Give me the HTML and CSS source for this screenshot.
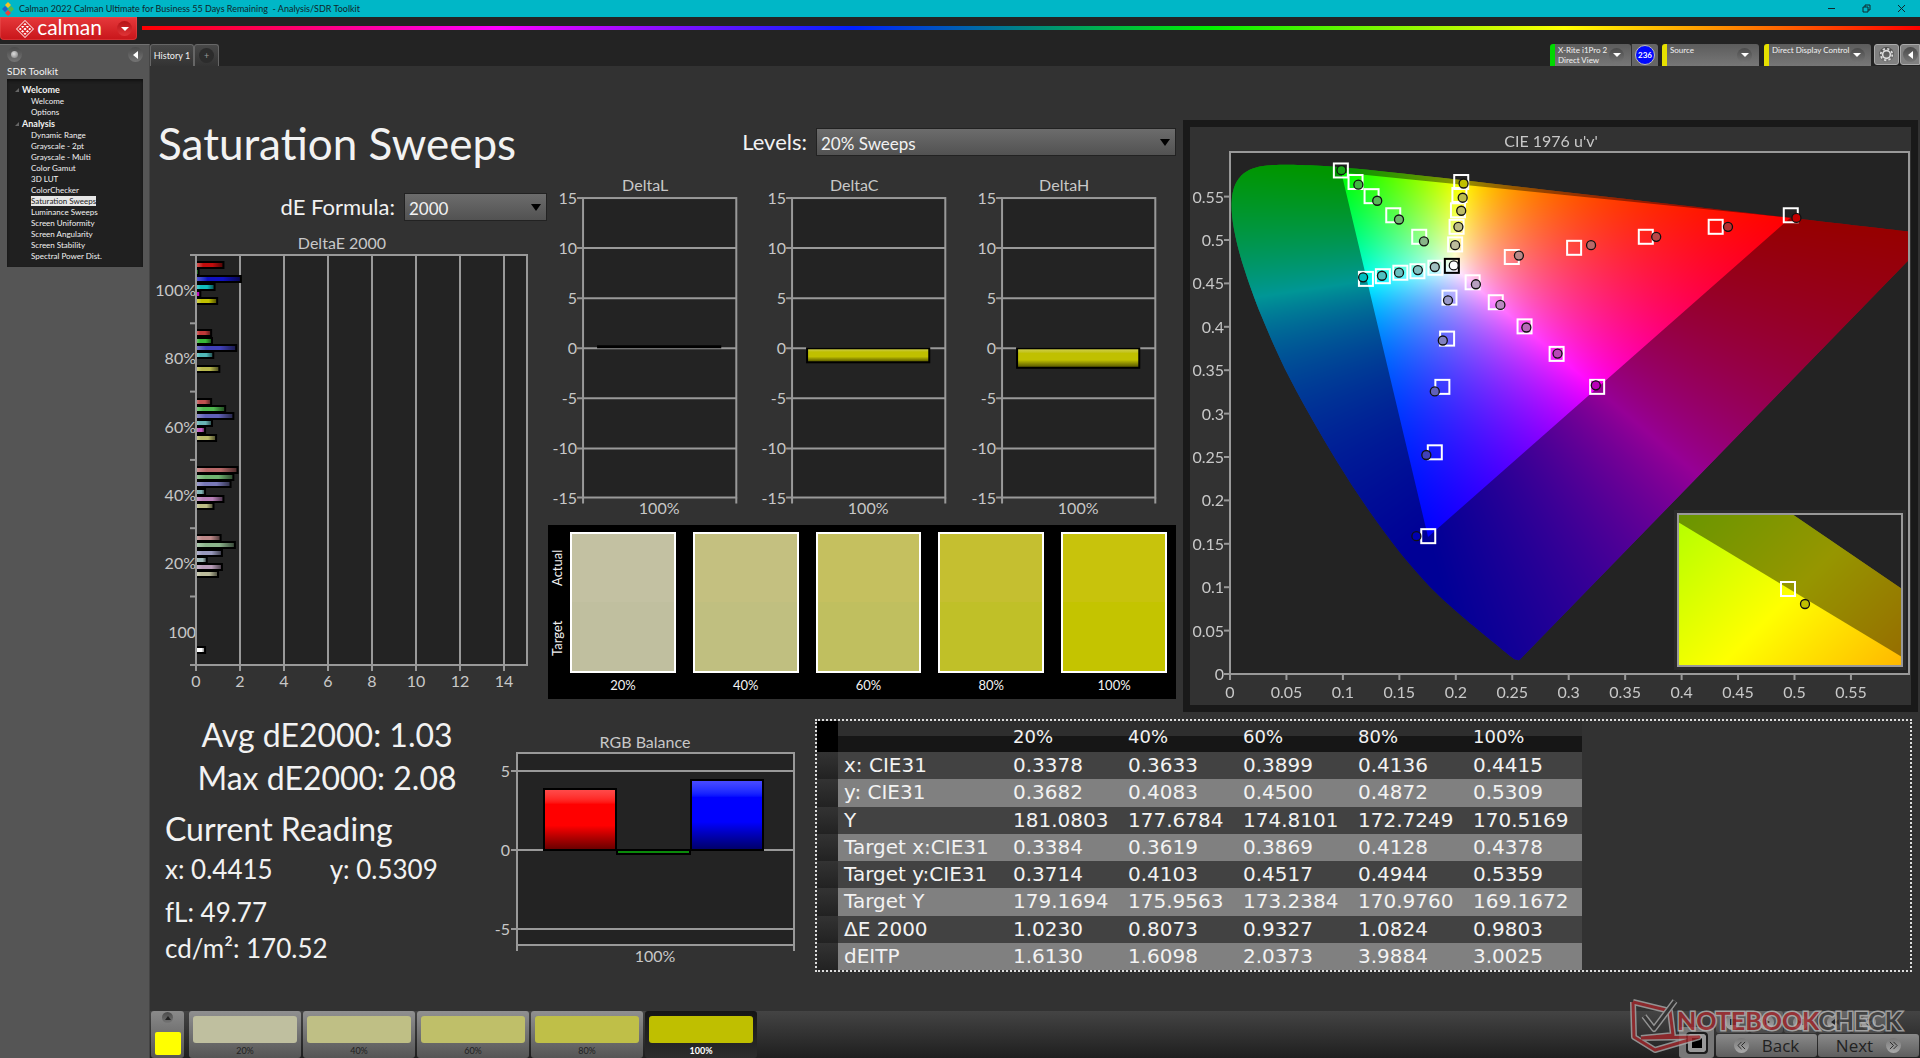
FILE: index.html
```html
<!DOCTYPE html>
<html lang="en">
<head>
<meta charset="utf-8">
<meta name="viewport" content="width=device-width, initial-scale=1">
<title>Calman - Analysis/SDR Toolkit</title>
<link rel="stylesheet" href="styles.css">
</head>
<body>
<header class="titlebar">
  <svg class="app-icon" viewBox="0 0 12 14" aria-hidden="true"><path fill="#f7c325" d="M6 0l3 3-3 3-3-3z"/><path fill="#e8413c" d="M6 8l3 3-3 3-3-3z"/><path fill="#59b947" d="M9 4l3 3-3 3-3-3z"/><path fill="#1d62c9" d="M3 4l3 3-3 3-3-3z"/></svg>
  <span class="titlebar-text">Calman 2022 Calman Ultimate for Business 55 Days Remaining&nbsp; - Analysis/SDR Toolkit</span>
  <div class="window-buttons">
    <button type="button" aria-label="Minimize"><svg viewBox="0 0 9 9"><path d="M1 4.500h7"/></svg></button>
    <button type="button" aria-label="Restore"><svg viewBox="0 0 9 9"><path d="M1 3h5v5H1zM3 3V1h5v5H6"/></svg></button>
    <button type="button" aria-label="Close"><svg viewBox="0 0 9 9"><path d="M1 1l7 7M8 1L1 8"/></svg></button>
  </div>
</header>

<div class="brandbar">
  <button type="button" class="brand">
    <svg class="brand-mark" viewBox="0 0 18 18" aria-hidden="true"><path fill="#fff" d="M9 0l9 9-9 9-9-9z"/><path stroke="#d92428" stroke-width="1.300" fill="none" d="M2 9l7-7 7 7-7 7zM4.300 6.700l7 7M6.700 4.300l7 7M13.700 6.700l-7 7M11.300 4.300l-7 7"/></svg>
    <span>calman</span>
    <i class="dot dot-red"><b class="tri-down"></b></i>
  </button>
  <div class="rainbow"></div>
</div>

<div class="workspace">
  <aside class="sidebar">
    <div class="sidebar-top">
      <button type="button" class="dot" aria-label="Record"><b class="bead"></b></button>
      <button type="button" class="dot" aria-label="Collapse"><b class="tri-left"></b></button>
    </div>
    <h2>SDR Toolkit</h2>
    <nav class="tree">
      <ul>
        <li><b>Welcome</b>
          <ul><li><a href="#welcome">Welcome</a></li><li><a href="#options">Options</a></li></ul>
        </li>
        <li><b>Analysis</b>
          <ul>
            <li><a href="#range">Dynamic Range</a></li>
            <li><a href="#g2">Grayscale - 2pt</a></li>
            <li><a href="#gm">Grayscale - Multi</a></li>
            <li><a href="#gamut">Color Gamut</a></li>
            <li><a href="#lut">3D LUT</a></li>
            <li><a href="#checker">ColorChecker</a></li>
            <li><a href="#saturation" class="current">Saturation Sweeps</a></li>
            <li><a href="#luminance">Luminance Sweeps</a></li>
            <li><a href="#uniformity">Screen Uniformity</a></li>
            <li><a href="#angularity">Screen Angularity</a></li>
            <li><a href="#stability">Screen Stability</a></li>
            <li><a href="#spectral">Spectral Power Dist.</a></li>
          </ul>
        </li>
      </ul>
    </nav>
  </aside>

  <div class="stage">
    <div class="tabbar">
      <div class="tabs">
        <button type="button" class="tab">History 1</button>
        <button type="button" class="tab tab-add" aria-label="Add tab"><i class="dot dot-dark">+</i></button>
      </div>
      <div class="devices">
        <button type="button" class="device device-meter"><span>X-Rite i1Pro 2<br>Direct View</span><i class="dot"><b class="tri-down"></b></i></button>
        <button type="button" class="device-count"><span>236</span></button>
        <button type="button" class="device device-source"><span>Source</span><i class="dot"><b class="tri-down"></b></i></button>
        <button type="button" class="device device-display"><span>Direct Display Control</span><i class="dot"><b class="tri-down"></b></i></button>
        <button type="button" class="square" aria-label="Settings"><i class="dot"><svg viewBox="0 0 14 14"><circle cx="7" cy="7" r="3.600" fill="none" stroke="#ddd" stroke-width="1.500"/><circle cx="7" cy="7" r="5.400" fill="none" stroke="#ddd" stroke-width="1.600" stroke-dasharray="2.100 2.140"/></svg></i></button>
        <button type="button" class="square square-last" aria-label="Expand"><i class="dot"><b class="tri-left"></b></i></button>
      </div>
    </div>

    <main class="board">
      <section class="upper">
        <div class="col-left">
          <h1>Saturation Sweeps</h1>
          <div class="field">
            <label for="formula">dE Formula:</label>
            <select id="formula" class="select-small"><option>2000</option></select>
          </div>
          <svg id="delta-e" class="chart" viewBox="0 0 398 466" role="img" aria-label="DeltaE 2000"></svg>
        </div>

        <div class="col-mid">
          <div class="field">
            <label for="levels">Levels:</label>
            <select id="levels" class="select-wide"><option>20% Sweeps</option></select>
          </div>
          <div class="trio">
            <svg class="chart delta" data-title="DeltaL" data-value="0.28" viewBox="0 0 209 346" role="img" aria-label="DeltaL"></svg>
            <svg class="chart delta" data-title="DeltaC" data-value="-1.40" viewBox="0 0 209 346" role="img" aria-label="DeltaC"></svg>
            <svg class="chart delta" data-title="DeltaH" data-value="-1.95" viewBox="0 0 209 346" role="img" aria-label="DeltaH"></svg>
          </div>
          <div class="compare">
            <div class="compare-side"><span>Actual</span><span>Target</span></div>
            <figure class="sw20"><div></div><figcaption>20%</figcaption></figure>
            <figure class="sw40"><div></div><figcaption>40%</figcaption></figure>
            <figure class="sw60"><div></div><figcaption>60%</figcaption></figure>
            <figure class="sw80"><div></div><figcaption>80%</figcaption></figure>
            <figure class="sw100"><div></div><figcaption>100%</figcaption></figure>
          </div>
        </div>

        <div class="col-right">
          <div class="cie-panel">
            <svg id="cie" class="chart" viewBox="0 0 721 578" role="img" aria-label="CIE 1976 u'v'">
              <rect x="40" y="25" width="679" height="522" fill="#232323"/>
              <foreignObject x="40" y="25" width="679" height="522"><canvas id="cie-canvas" width="679" height="522"></canvas></foreignObject>
            </svg>
          </div>
        </div>
      </section>

      <section class="lower">
        <div class="readings">
          <p class="big center">Avg dE2000: 1.03</p>
          <p class="big center">Max dE2000: 2.08</p>
          <h2 class="big">Current Reading</h2>
          <p class="pair"><span>x: 0.4415</span><span>y: 0.5309</span></p>
          <p>fL: 49.77</p>
          <p>cd/m²: 170.52</p>
        </div>

        <svg id="rgb" class="chart" viewBox="0 0 335 257" role="img" aria-label="RGB Balance"></svg>

        <div class="table-box">
          <table>
            <thead><tr><td class="grip"></td><td class="name"></td><th>20%</th><th>40%</th><th>60%</th><th>80%</th><th class="last">100%</th></tr></thead>
            <tbody>
              <tr><td class="grip"></td><th>x: CIE31</th><td>0.3378</td><td>0.3633</td><td>0.3899</td><td>0.4136</td><td>0.4415</td></tr>
              <tr><td class="grip"></td><th>y: CIE31</th><td>0.3682</td><td>0.4083</td><td>0.4500</td><td>0.4872</td><td>0.5309</td></tr>
              <tr><td class="grip"></td><th>Y</th><td>181.0803</td><td>177.6784</td><td>174.8101</td><td>172.7249</td><td>170.5169</td></tr>
              <tr><td class="grip"></td><th>Target x:CIE31</th><td>0.3384</td><td>0.3619</td><td>0.3869</td><td>0.4128</td><td>0.4378</td></tr>
              <tr><td class="grip"></td><th>Target y:CIE31</th><td>0.3714</td><td>0.4103</td><td>0.4517</td><td>0.4944</td><td>0.5359</td></tr>
              <tr><td class="grip"></td><th>Target Y</th><td>179.1694</td><td>175.9563</td><td>173.2384</td><td>170.9760</td><td>169.1672</td></tr>
              <tr><td class="grip"></td><th>ΔE 2000</th><td>1.0230</td><td>0.8073</td><td>0.9327</td><td>1.0824</td><td>0.9803</td></tr>
              <tr><td class="grip"></td><th>dEITP</th><td>1.6130</td><td>1.6098</td><td>2.0373</td><td>3.9884</td><td>3.0025</td></tr>
            </tbody>
          </table>
        </div>
      </section>
    </main>

    <footer class="dock">
      <button type="button" class="dock-current" aria-label="Show patterns"><i class="dot"><b class="tri-up"></b></i><span></span></button>
      <div class="dock-list">
        <button type="button" class="pattern p20"><span></span>20%</button>
        <button type="button" class="pattern p40"><span></span>40%</button>
        <button type="button" class="pattern p60"><span></span>60%</button>
        <button type="button" class="pattern p80"><span></span>80%</button>
        <button type="button" class="pattern p100"><span></span>100%</button>
      </div>
      <div class="dock-controls">
        <button type="button" class="stop" aria-label="Stop"><i></i></button>
        <div class="dock-stack">
          <div class="transport">
            <button type="button" aria-label="Stop reading"><i class="dot"><svg viewBox="0 0 8 8"><path d="M1 1h6v6H1z"/></svg></i></button>
            <button type="button" aria-label="Play"><i class="dot"><svg viewBox="0 0 8 8"><path d="M2 1l5 3-5 3z"/></svg></i></button>
            <button type="button" aria-label="Read series"><i class="dot"><svg viewBox="0 0 8 8"><path d="M0 1l4 3-4 3zM5 1h2v6H5z"/></svg></i></button>
            <button type="button" aria-label="Read continuous"><i class="dot"><svg viewBox="0 0 8 8"><path d="M0 4l4-3v6zM4 4l4-3v6z"/></svg></i></button>
            <button type="button" aria-label="Repeat"><i class="dot"><svg viewBox="0 0 8 8"><path fill="none" stroke="#222" d="M6 2a3 3 0 1 0 1 2M6 0v2H4"/></svg></i></button>
          </div>
          <div class="steps">
            <button type="button"><i class="dot"><svg viewBox="0 0 10 10"><path fill="none" stroke="#222" d="M5 1L1 5l4 4M9 1L5 5l4 4"/></svg></i>Back</button>
            <button type="button">Next<i class="dot"><svg viewBox="0 0 10 10"><path fill="none" stroke="#222" d="M1 1l4 4-4 4M5 1l4 4-4 4"/></svg></i></button>
          </div>
        </div>
        <svg class="watermark" viewBox="0 0 290 60" aria-label="Notebookcheck">
          <g fill="none" stroke-linejoin="round">
            <path stroke="#aaa" stroke-width="6" d="M4 9l37 9 3 24-32 3M12 45l58-1-44 13-21-13L4 9"/>
            <path stroke="#a3282c" stroke-width="3" d="M4 9l37 9 3 24-32 3M12 45l58-1-44 13-21-13L4 9"/>
            <path stroke="#aaa" stroke-width="6" d="M15 23l10 13L46 8"/>
            <path stroke="#333" stroke-width="3" d="M15 23l10 13L46 8"/>
          </g>
          <text x="48" y="37"><tspan class="wm-a">NOTEBOOK</tspan><tspan class="wm-b">CHECK</tspan></text>
        </svg>
      </div>
    </footer>
  </div>
</div>
<script src="charts.js"></script>
</body>
</html>
```

FILE: styles.css
```css
* { box-sizing: border-box; }

body {
  margin: 0;
  min-height: 100vh;
  display: flex;
  flex-direction: column;
  background: #232323;
  color: #f2f2f2;
  font-family: Lato, "Open Sans", sans-serif;
  overflow-x: hidden;
}

button {
  border: 0;
  padding: 0;
  background: none;
  color: inherit;
  font: inherit;
}

ul { list-style: none; margin: 0; padding: 0; }
h1, h2, p, figure { margin: 0; font-weight: 400; }
svg { display: block; }

/* Window title */
.titlebar {
  height: 17px;
  display: flex;
  align-items: center;
  background: #00b7c7;
  color: #10262a;
}
.app-icon { width: 12px; height: 14px; margin: 0 5px 0 2px; }
.titlebar-text { font-size: 9px; line-height: 17px; }
.window-buttons { display: flex; gap: 26px; margin-left: auto; padding-right: 14px; }
.window-buttons svg { width: 9px; height: 9px; fill: none; stroke: #10262a; }

/* Brand strip */
.brandbar { height: 27px; display: flex; align-items: flex-start; background: #232323; }
.brand {
  width: 137px;
  height: 23px;
  display: flex;
  align-items: center;
  justify-content: flex-end;
  padding-right: 5px;
  border-radius: 0 0 4px 4px;
  background: linear-gradient(#e6393b, #c8151a);
  box-shadow: inset 0 0 0 1px #f0605c55;
  font-size: 21px;
  line-height: 20px;
  color: #fff;
}
.brand span { margin: 0 15px 4px 3px; }
.brand-mark { width: 18px; height: 18px; }
.rainbow {
  flex: 1;
  height: 4px;
  margin: 9px 0 0 5px;
  background: linear-gradient(90deg, #f00, #f0f, #0020ff, #00f000, #ff0, #f00);
}

/* Round glossy marks */
.dot {
  width: 15px;
  height: 15px;
  flex: none;
  display: flex;
  align-items: center;
  justify-content: center;
  border-radius: 50%;
  background: linear-gradient(#4a4a4a, #757575);
  font-style: normal;
}
.dot-red { background: linear-gradient(#b51317, #e03437); }
.dot-dark { background: #2c2c2c; color: #999; }
.bead { width: 7px; height: 7px; border-radius: 50%; background: radial-gradient(circle at 40% 40%, #ddd, #777); }
.tri-down { border: 4px solid transparent; border-top: 4px solid #fff; border-bottom: 0; }
.tri-up { border: 3px solid transparent; border-bottom: 4px solid #222; border-top: 0; }
.tri-left { border: 4px solid transparent; border-right: 5px solid #fff; border-left: 0; }

.workspace { flex: 1; display: flex; }

/* Workflow tree */
.sidebar {
  width: 150px;
  flex: none;
  padding: 2px 6px 0 7px;
  background: #555;
  border-top: 1px solid #707070;
  border-right: 1px solid #444;
}
.sidebar-top { display: flex; justify-content: space-between; }
.sidebar h2 { font-size: 10px; line-height: 14px; padding: 2px 0 1px; }
.tree {
  height: 188px;
  padding: 5px 0 0 9px;
  background: #202020;
  box-shadow: inset 0 2px 3px #111;
  font-size: 8px;
  line-height: 11px;
}
.tree b { position: relative; padding-left: 6px; font-size: 9px; }
.tree b::before {
  content: "";
  position: absolute;
  left: -1px;
  bottom: 3px;
  border: 2px solid transparent;
  border-right-color: #666;
  border-bottom-color: #666;
}
.tree ul ul { padding-left: 15px; }
.tree a { color: #f2f2f2; text-decoration: none; }
.tree a.current { background: #e6e6e6; color: #222; }

/* Tabs and devices */
.stage { flex: 1; min-width: 0; display: flex; flex-direction: column; background: #323232; }
.tabbar { height: 22px; display: flex; justify-content: space-between; background: #232323; }
.tabs { display: flex; }
.tab {
  width: 44px;
  height: 22px;
  background: linear-gradient(#484848, #333);
  border: 1px solid #666;
  border-bottom: 0;
  border-radius: 3px 3px 0 0;
  font-size: 9px;
  white-space: nowrap;
}
.tab-add { width: 25px; padding-left: 4px; }
.devices { display: flex; align-items: stretch; }
.device {
  display: flex;
  justify-content: space-between;
  align-items: center;
  padding: 0 7px 0 3px;
  border-left: 5px solid #e6e000;
  border-radius: 3px 3px 0 0;
  background: linear-gradient(#5c5c5c, #777);
  font-size: 8px;
  line-height: 10px;
  text-align: left;
  white-space: nowrap;
}
.device span { align-self: flex-start; padding-top: 1px; }
.device-meter { width: 81px; border-left-color: #00d800; }
.device-count { width: 27px; margin-right: 4px; display: flex; justify-content: center; align-items: center; background: #666; border-left: 1px solid #333; border-radius: 0 3px 0 0; }
.device-count span { width: 20px; height: 20px; border-radius: 50%; border: 1px solid #bbb; background: #0008ff; color: #fff; font-size: 8px; line-height: 18px; font-weight: 700; }
.device-source { width: 97px; margin-right: 5px; }
.device-display { width: 107px; margin-right: 3px; }
.square { width: 25px; height: 21px; display: flex; align-items: center; justify-content: center; border: 1px solid #aaa; border-radius: 3px; background: #808080; }
.square-last { width: 20px; margin-left: 1px; border-radius: 3px 0 0 3px; }

/* Board */
.board { flex: 1; }
.upper { display: grid; grid-template-columns: 398fr 628fr 744fr; align-items: start; }
.lower { display: grid; grid-template-columns: 330fr 335fr 1105fr; align-items: start; margin-top: 1px; }
.chart { width: 100%; height: auto; font-size: 16px; fill: #c8c8c8; }
.chart line { stroke: #999; stroke-width: 2; }
.chart .frame { fill: #232323; stroke: #999; stroke-width: 2; }
.chart .outline { fill: none; stroke: #999; stroke-width: 2; }
.chart .title { text-anchor: middle; }
.chart .end { text-anchor: end; }

h1 { padding: 49px 0 22px 8px; font-size: 44px; line-height: 56px; }
.field { display: flex; justify-content: flex-end; align-items: center; gap: 9px; }
.field label { font-size: 22px; line-height: 28px; }
.field select {
  height: 28px;
  padding: 2px 4px 0;
  border: 1px solid #222;
  border-radius: 0;
  appearance: none;
  background: url("data:image/svg+xml,%3Csvg xmlns='http://www.w3.org/2000/svg' width='10' height='7'%3E%3Cpath d='M0 0h10L5 7z'/%3E%3C/svg%3E") no-repeat right 5px center, linear-gradient(#6c6c6c, #525252);
  color: #f2f2f2;
  font: 17px Lato, sans-serif;
}
.col-left .field { padding-right: 1px; }
.select-small { width: 143px; }
.select-wide { width: 360px; }
.col-left .chart { margin-top: 11px; }

.col-mid { padding-top: 62px; }
.trio { display: grid; grid-template-columns: repeat(3, 1fr); margin-top: 14px; }
.compare {
  display: flex;
  height: 174px;
  margin-top: 8px;
  padding: 7px 9px 0 0;
  gap: 17px;
  background: #000;
}
.compare-side {
  width: 22px;
  height: 142px;
  margin-right: -17px;
  padding-left: 4px;
  display: flex;
  flex-direction: row-reverse;
  justify-content: space-around;
  align-items: center;
  writing-mode: vertical-rl;
  transform: rotate(180deg);
  font-size: 13px;
}
.compare figure { flex: 1; text-align: center; font-size: 13px; line-height: 24px; }
.compare figure div { height: 141px; border: 2px solid #fff; }
.sw20 div { background: linear-gradient(#c3c1a2 50%, #c0bf9f 50%); }
.sw40 div { background: linear-gradient(#c4c080 50%, #c0bf80 50%); }
.sw60 div { background: linear-gradient(#c5c05f 50%, #c0bf5f 50%); }
.sw80 div { background: linear-gradient(#c5bf30 50%, #c0c028 50%); }
.sw100 div { background: linear-gradient(#c8c30c 50%, #c4c400 50%); }

.col-right { padding: 54px 2px 0 7px; }
.cie-panel { border: 7px solid #191919; }
#cie-canvas { display: block; }

/* Readings */
.readings { padding-left: 15px; font-size: 26px; }
.readings .big { font-size: 32px; line-height: 43px; }
.readings .center { padding-left: 9px; text-align: center; }
.readings h2.big { margin: 8px 0 1px; }
.readings p { line-height: 36px; }
.readings .pair { display: flex; gap: 57px; margin-bottom: 7px; }

/* Result table */
.table-box { margin: 6px 8px 0 0; border: 2px dotted #ddd; height: 253px; }
table { width: 765px; height: 249px; border-collapse: collapse; table-layout: fixed; font-family: "DejaVu Sans", sans-serif; font-size: 20px; line-height: 27px; }
td, th { padding: 0; font-weight: 400; text-align: left; }
thead th { width: 115px; }
thead .last { width: auto; }
.grip { width: 21px; background: linear-gradient(#333, #222); }
.grip + * { width: 175px; padding-left: 6px; }
thead { background: linear-gradient(#2e2e2e 50%, #161616 50%); font-size: 18px; }
thead .grip { background: #000; }
thead tr { height: 31px; }
tbody tr { height: 27px; background: #424242; }
tbody tr:nth-child(even) { background: #808080; }

/* Pattern dock */
.dock { height: 47px; display: flex; padding-left: 1px; background: linear-gradient(#444, #1f1f1f); }
.dock button { border-radius: 3px; }
.dock-current { width: 33px; display: flex; flex-direction: column; align-items: center; justify-content: space-between; padding: 1px 4px 3px; background: linear-gradient(#8a8a8a, #555); }
.dock-current .dot { width: 11px; height: 11px; }
.dock-current span { width: 26px; height: 23px; border-radius: 2px; background: #ff0; }
.dock-list { display: flex; gap: 2px; margin-left: 5px; }
.pattern { width: 112px; padding: 4px 4px 0; background: linear-gradient(#909090, #555); color: #222; font-size: 9px; line-height: 14px; }
.pattern span { display: block; height: 27px; margin-bottom: 1px; border-radius: 3px; }
.p20 span { background: #bfbf9f; }
.p40 span { background: #bfbf85; }
.p60 span { background: #bfbf69; }
.p80 span { background: #bfbf48; }
.p100 span { background: #bfbf00; }
.dock .p100 { background: linear-gradient(#161616, #2c2c2c); color: #fff; font-weight: 700; }

.dock-controls { position: relative; display: flex; gap: 2px; margin-left: auto; padding-right: 1px; }
.stop { width: 35px; height: 31px; align-self: flex-end; display: flex; align-items: center; justify-content: center; background: #777; }
.stop i { width: 22px; height: 22px; border: 2px solid #1c1c1c; border-radius: 4px; background: #000; box-shadow: inset 0 0 0 4px #999; }
.dock-stack { display: flex; flex-direction: column; gap: 1px; }
.transport { display: flex; gap: 1px; }
.transport button { width: 33px; height: 22px; display: flex; align-items: center; justify-content: center; background: linear-gradient(#666, #4a4a4a); }
.transport svg { width: 8px; height: 8px; fill: #222; }
.transport .dot, .steps .dot { background: linear-gradient(#777, #aaa); }
.steps { display: flex; gap: 1px; }
.steps button { width: 101px; height: 23px; display: flex; align-items: center; justify-content: center; gap: 13px; background: linear-gradient(#8a8a8a, #5e5e5e); color: #222; font: 17px "Open Sans", sans-serif; }
.steps svg { width: 9px; height: 9px; }
.watermark { position: absolute; right: 1px; bottom: 5px; width: 290px; height: 60px; opacity: 0.8; pointer-events: none; }
.watermark text { font: 700 25px Lato, sans-serif; stroke: #b5b5b5; stroke-width: 3px; paint-order: stroke; }
.wm-a { fill: #a3282c; }
.wm-b { fill: #3c3c3c; }
```

FILE: charts.js
```js
const NS = 'http://www.w3.org/2000/svg';

function add(parent, name, attrs, text) {
  const node = document.createElementNS(NS, name);
  for (const key in attrs) node.setAttribute(key, attrs[key]);
  if (text !== undefined) node.textContent = text;
  parent.appendChild(node);
  return node;
}

function line(svg, x1, y1, x2, y2) {
  add(svg, 'line', { x1, y1, x2, y2 });
}

let gradientCount = 0;

// Shaded fill: light edge, plain middle, dark edge.
function shade(svg, color, vertical) {
  const id = 'shade' + gradientCount++;
  const end = vertical ? { x2: 0, y2: 1 } : { x2: 1, y2: 0 };
  const g = add(svg, 'linearGradient', Object.assign({ id, x1: 0, y1: 0 }, end));
  add(g, 'stop', { offset: 0, 'stop-color': `color-mix(in srgb, ${color} 70%, white)` });
  add(g, 'stop', { offset: 0.25, 'stop-color': color });
  add(g, 'stop', { offset: 0.6, 'stop-color': color });
  add(g, 'stop', { offset: 1, 'stop-color': `color-mix(in srgb, ${color} 40%, black)` });
  return `url(#${id})`;
}

function bar(svg, x, y, width, height, color, vertical) {
  add(svg, 'rect', { x, y, width, height, fill: shade(svg, color, vertical), stroke: '#000', 'stroke-width': 2 });
}

// DeltaE 2000, one group of bars for each saturation level
function drawDeltaE() {
  const svg = document.getElementById('delta-e');
  add(svg, 'text', { x: 192, y: 17, class: 'title' }, 'DeltaE 2000');
  add(svg, 'rect', { x: 46, y: 23, width: 331, height: 410, class: 'frame' });
  for (let i = 0; i < 8; i++) {
    const x = 46 + i * 44;
    line(svg, x, 23, x, 439);
    add(svg, 'text', { x, y: 455, class: 'title' }, i * 2);
  }
  const groups = [
    ['100%', [['#c00c0c', 1.27], ['#20a020', 0.12], ['#1010c0', 2.08], ['#10bcbc', 0.86], ['#c010c0', 0.2], ['#c0c000', 0.98]]],
    ['80%', [['#c03838', 0.7], ['#38b838', 0.74], ['#4040b8', 1.86], ['#50b8b8', 0.8], null, ['#b8b84c', 1.08]]],
    ['60%', [['#c05050', 0.7], ['#50b850', 1.35], ['#6060b8', 1.73], ['#68b4b4', 0.74], ['#c060c0', 0.42], ['#b8b868', 0.93]]],
    ['40%', [['#b86868', 1.92], ['#70b470', 1.73], ['#7878b8', 1.6], ['#80b4b4', 0.42], ['#b880b8', 1.27], ['#bcbc84', 0.81]]],
    ['20%', [['#bc8888', 1.14], ['#8cb48c', 1.8], ['#9898bc', 1.2], ['#a0b8b8', 0.5], ['#b89cb8', 1.2], ['#bcbc9c', 1.02]]],
    ['100', [null, null, null, null, null, null, ['#ffffff', 0.42]]]
  ];
  groups.forEach(([label, bars], row) => {
    const top = 23 + row * 68.3;
    line(svg, 40, top, 46, top);
    add(svg, 'text', { x: 46, y: top + 41, class: 'end' }, label);
    bars.forEach((item, i) => {
      if (item) bar(svg, 46, Math.round(top + 7 + i * 7.2), item[1] * 21.6, 6, item[0], false);
    });
  });
  line(svg, 40, 433, 46, 433);
  line(svg, 46, 23, 46, 433);
}

function drawDelta(svg) {
  const value = Number(svg.dataset.value);
  add(svg, 'text', { x: 97, y: 21, class: 'title' }, svg.dataset.title);
  add(svg, 'rect', { x: 35, y: 28, width: 153, height: 299, class: 'frame' });
  for (let v = 15, y = 28; v >= -15; v -= 5, y += 50) {
    const yy = Math.min(y, 327);
    line(svg, 29, yy, v === 15 || v === -15 ? 35 : 188, yy);
    add(svg, 'text', { x: 29, y: yy + 6, class: 'end' }, v);
  }
  line(svg, 35, 327, 35, 333);
  line(svg, 188, 327, 188, 333);
  const zero = 178;
  const size = Math.abs(value) * 10;
  bar(svg, 50, value > 0 ? zero - 2 : zero, 122, value > 0 ? 1 : size, value > 0 ? '#000000' : '#c0c000', true);
  add(svg, 'text', { x: 111, y: 343, class: 'title' }, '100%');
}

function drawRgb() {
  const svg = document.getElementById('rgb');
  add(svg, 'text', { x: 165, y: 35, class: 'title' }, 'RGB Balance');
  add(svg, 'rect', { x: 37, y: 40, width: 277, height: 192, class: 'frame' });
  [[5, 58], [0, 137], [-5, 216]].forEach(([v, y]) => {
    line(svg, 31, y, 314, y);
    add(svg, 'text', { x: 30, y: y + 6, class: 'end' }, v);
  });
  line(svg, 37, 232, 37, 238);
  line(svg, 314, 232, 314, 238);
  bar(svg, 64, 76, 72, 61, '#ff0000', true);
  add(svg, 'rect', { x: 137, y: 137, width: 73, height: 4, fill: '#0b8a0b', stroke: '#000', 'stroke-width': 2 });
  bar(svg, 211, 67, 72, 70, '#0000ff', true);
  add(svg, 'text', { x: 175, y: 249, class: 'title' }, '100%');
}

// Spectral locus in CIE 1931 x, y
const LOCUS = [
  [.1741, .0050], [.1733, .0048], [.1714, .0051], [.1689, .0069], [.1644, .0109], [.1566, .0177], [.1440, .0297],
  [.1355, .0399], [.1241, .0578], [.1096, .0868], [.0913, .1327], [.0687, .2007], [.0454, .2950], [.0235, .4127],
  [.0082, .5384], [.0039, .6548], [.0139, .7502], [.0389, .8120], [.0743, .8338], [.1142, .8262], [.1547, .8059],
  [.2296, .7543], [.3016, .6923], [.3731, .6245], [.4441, .5547], [.5125, .4866], [.5752, .4242], [.6270, .3725],
  [.6658, .3340], [.6915, .3083], [.7190, .2809], [.7347, .2653]
].map(([x, y]) => {
  const d = -2 * x + 12 * y + 3;
  return [4 * x / d, 9 * y / d];
});
const GAMUT = [[.4964, .5255], [.0986, .5777], [.1754, .1579]];
const SX = 1129;
const SY = 868;

function paintDiagram() {
  const canvas = document.getElementById('cie-canvas');
  const w = canvas.width;
  const h = canvas.height;
  const source = document.createElement('canvas');
  source.width = w;
  source.height = h;
  const sctx = source.getContext('2d');
  const image = sctx.createImageData(w, h);
  for (let py = 0; py < h; py++) {
    for (let px = 0; px < w; px++) {
      const u = px / SX;
      const v = Math.max((h - py) / SY, 0.004);
      const X = 9 * u / (4 * v);
      const Z = (12 - 3 * u - 20 * v) / (4 * v);
      const rgb = [
        2.4935 * X - 0.9314 - 0.4027 * Z,
        -0.8295 * X + 1.7627 + 0.0236 * Z,
        0.0358 * X - 0.0762 + 0.9569 * Z
      ].map(c => Math.max(c, 0));
      const top = Math.max(...rgb, 1e-6);
      const at = (py * w + px) * 4;
      for (let i = 0; i < 3; i++) image.data[at + i] = 255 * rgb[i] / top;
      image.data[at + 3] = 255;
    }
  }
  sctx.putImageData(image, 0, 0);

  const ctx = canvas.getContext('2d');
  const point = ([u, v]) => [u * SX, h - v * SY];
  const locus = new Path2D();
  const pts = LOCUS.map(point);
  locus.moveTo(...pts[0]);
  for (let i = 0; i < pts.length - 1; i++) {
    // Catmull-Rom segment written as a cubic curve
    const a = pts[Math.max(i - 1, 0)], b = pts[i], c = pts[i + 1], d = pts[Math.min(i + 2, pts.length - 1)];
    locus.bezierCurveTo(b[0] + (c[0] - a[0]) / 6, b[1] + (c[1] - a[1]) / 6, c[0] - (d[0] - b[0]) / 6, c[1] - (d[1] - b[1]) / 6, c[0], c[1]);
  }
  locus.closePath();
  ctx.save();
  ctx.clip(locus);
  ctx.drawImage(source, 0, 0);
  const outside = new Path2D();
  outside.rect(0, 0, w, h);
  GAMUT.map(point).forEach((p, i) => i ? outside.lineTo(...p) : outside.moveTo(...p));
  outside.closePath();
  ctx.fillStyle = 'rgba(0,0,0,.41)';
  ctx.fill(outside, 'evenodd');
  ctx.restore();
}

// u', v' of target then measured, from 20% to 100%
const SERIES = [
  [['#88b488', '#70b870', '#58b858', '#40b840', '#18a818'],
    [[.1676, .5037], [.1446, .5285], [.1254, .5505], [.1112, .5668], [.0982, .5801]],
    [[.1718, .4985], [.1497, .5236], [.1304, .5452], [.1137, .5637], [.0987, .5805]]],
  [['#bcbc9c', '#bcbc84', '#bcbc68', '#bcbc4c', '#c0c000'],
    [[.1994, .4949], [.2007, .5152], [.2019, .5342], [.2032, .5518], [.2048, .5668]],
    [[.1994, .4940], [.2023, .5152], [.2048, .5337], [.2061, .5487], [.2069, .5651]]],
  [['#b88888', '#b86868', '#b84848', '#b83030', '#c00000'],
    [[.2496, .4804], [.3048, .4910], [.3683, .5037], [.4302, .5152], [.4967, .5285]],
    [[.2559, .4821], [.3198, .4940], [.3775, .5037], [.4411, .5152], [.5017, .5254]]],
  [['#b8a0c0', '#b888c0', '#b868b8', '#b848b8', '#b800b8'],
    [[.2149, .4513], [.2354, .4283], [.2609, .4005], [.2893, .3688], [.3252, .3308]],
    [[.2178, .4490], [.2395, .4252], [.2625, .3992], [.2901, .3692], [.3240, .3326]]],
  [['#9898c8', '#8080c0', '#6060b8', '#4040b8', '#0000b0'],
    [[.1944, .4336], [.1923, .3864], [.1881, .3308], [.1814, .2554], [.1756, .1588]],
    [[.1931, .4305], [.1885, .3842], [.1814, .3255], [.1739, .2523], [.1651, .1588]]],
  [['#a0c0c0', '#80c0c0', '#68c0c0', '#50c0c0', '#00c0c0'],
    [[.1819, .4680], [.1660, .4640], [.1509, .4623], [.1354, .4583], [.1204, .4552]],
    [[.1814, .4689], [.1664, .4654], [.1497, .4623], [.1346, .4588], [.1179, .4570]]]
];

function square(svg, x, y, stroke) {
  add(svg, 'rect', { x: x - 7, y: y - 7, width: 14, height: 14, fill: 'none', stroke, 'stroke-width': 2 });
}
function circle(svg, x, y, fill) {
  add(svg, 'circle', { cx: x, cy: y, r: 4.5, fill, stroke: '#111', 'stroke-width': 1.3 });
}

function drawCie() {
  const svg = document.getElementById('cie');
  const x0 = 40;
  const y0 = 547;
  add(svg, 'text', { x: 361, y: 20, class: 'title' }, "CIE 1976 u'v'");
  add(svg, 'rect', { x: x0, y: 25, width: 679, height: 522, class: 'outline' });
  for (let i = 0; i < 12; i++) {
    const label = String(i * 5 / 100);
    const x = x0 + i * 0.05 * SX;
    const y = y0 - i * 0.05 * SY;
    line(svg, x, y0, x, y0 + 6);
    line(svg, x0 - 6, y, x0, y);
    add(svg, 'text', { x, y: 571, class: 'title' }, label);
    add(svg, 'text', { x: 34, y: y + 6, class: 'end' }, label);
  }
  const px = p => x0 + p[0] * SX;
  const py = p => y0 - p[1] * SY;
  SERIES.forEach(s => s[1].forEach(p => square(svg, px(p), py(p), '#fff')));
  square(svg, px([.1965]), py([0, .4702]), '#000');
  SERIES.forEach(s => s[2].forEach((p, i) => circle(svg, px(p), py(p), s[0][i])));
  circle(svg, px([.1982]), py([0, .4707]), '#fff');

  // Close-up of the selected colour
  const g = add(svg, 'g', { transform: 'translate(488 387)' });
  const grad = add(g, 'linearGradient', { id: 'closeup', gradientUnits: 'userSpaceOnUse', x1: 0, y1: 0, x2: 187, y2: 187 });
  add(grad, 'stop', { offset: 0, 'stop-color': '#b2ff00' });
  add(grad, 'stop', { offset: 0.52, 'stop-color': '#ffff00' });
  add(grad, 'stop', { offset: 1, 'stop-color': '#ffb800' });
  add(g, 'rect', { x: -4, y: -4, width: 232, height: 160, fill: '#2b2b2b' });
  add(g, 'rect', { width: 224, height: 152, fill: '#232323' });
  add(g, 'path', { d: 'M0 0H114L224 75V152H0z', fill: 'url(#closeup)' });
  add(g, 'path', { d: 'M0 0H114L224 75V143L0 8z', fill: '#000', opacity: 0.41 });
  add(g, 'rect', { width: 224, height: 152, class: 'outline' });
  square(g, 110, 75, '#fff');
  circle(g, 127, 90, '#c0c000');
}

drawDeltaE();
document.querySelectorAll('.delta').forEach(drawDelta);
drawRgb();
paintDiagram();
drawCie();
```
